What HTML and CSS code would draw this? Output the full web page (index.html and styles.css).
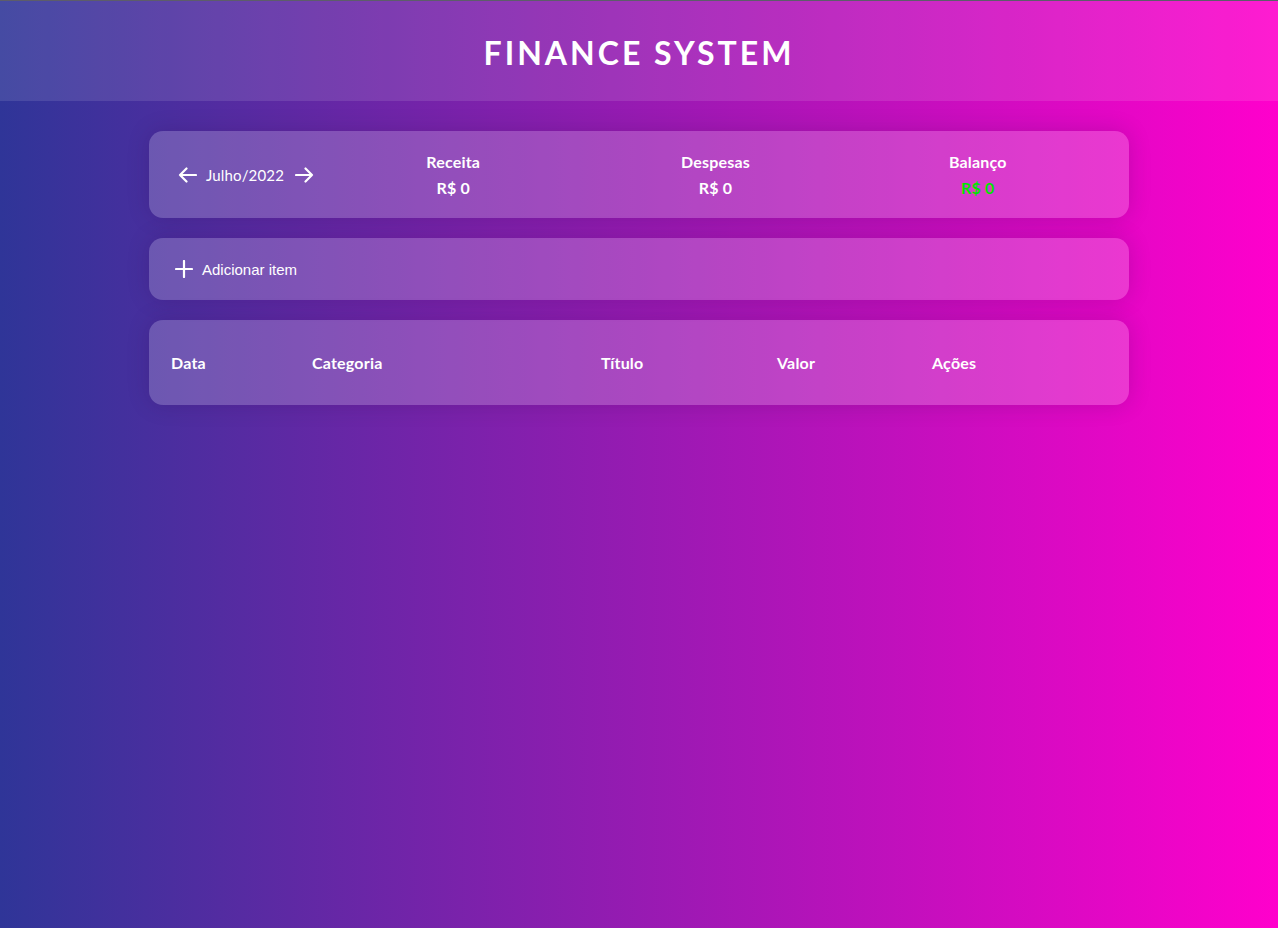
FILE: index.html
```html
<!DOCTYPE html>
<html lang="pt-BR">
<head>
<meta charset="utf-8">
<title>Finance System</title>
<link rel="stylesheet" href="styles.css">
</head>
<body>
<header class="header">
  <h1 class="header-title">FINANCE SYSTEM</h1>
</header>
<main class="body">
  <section class="card info">
    <div class="month">
      <button class="arrow" aria-label="Anterior">
        <svg width="19" height="16" viewBox="0 0 19 16"><path d="M18 8H2M8.5 1.5L2 8l6.5 6.5" fill="none" stroke="#fff" stroke-width="2.2" stroke-linecap="round" stroke-linejoin="round"/></svg>
      </button>
      <span class="month-title">Julho/2022</span>
      <button class="arrow" aria-label="Próximo">
        <svg width="19" height="16" viewBox="0 0 19 16"><path d="M1 8h16M10.5 1.5L17 8l-6.5 6.5" fill="none" stroke="#fff" stroke-width="2.2" stroke-linecap="round" stroke-linejoin="round"/></svg>
      </button>
    </div>
    <div class="resume">
      <div class="resume-title">Receita</div>
      <div class="resume-value">R$ 0</div>
    </div>
    <div class="resume">
      <div class="resume-title">Despesas</div>
      <div class="resume-value">R$ 0</div>
    </div>
    <div class="resume">
      <div class="resume-title">Balanço</div>
      <div class="resume-value positive">R$ 0</div>
    </div>
  </section>

  <section class="card add">
    <button class="add-btn">
      <svg width="18" height="18" viewBox="0 0 18 18"><path d="M9 1v16M1 9h16" stroke="#fff" stroke-width="2.2" stroke-linecap="round"/></svg>
      <span>Adicionar item</span>
    </button>
  </section>

  <section class="card list">
    <table class="table">
      <thead>
        <tr>
          <th class="c-data">Data</th>
          <th class="c-cat">Categoria</th>
          <th class="c-tit">Título</th>
          <th class="c-val">Valor</th>
          <th class="c-act">Ações</th>
        </tr>
      </thead>
    </table>
  </section>
</main>
</body>
</html>
```

FILE: styles.css
```css
* { box-sizing: border-box; }

html, body { height: 100%; }

body {
  margin: 0;
  min-height: 928px;
  background: linear-gradient(90deg, #2f3598 0%, #ff00cc 100%);
  font-family: "Lato", "Noto Sans", sans-serif;
  color: #fff;
}

.header {
  height: 101px;
  border-top: 1px solid #5d5d6a;
  background: rgba(255, 255, 255, 0.11);
  display: flex;
  align-items: center;
  justify-content: center;
}

.header-title {
  margin: 0;
  font-size: 32px;
  font-weight: 700;
  letter-spacing: 3px;
  padding-top: 3px;
}

.body {
  width: 980px;
  margin: 30px auto 0;
  display: flex;
  flex-direction: column;
  gap: 20px;
}

.card {
  background: rgba(255, 255, 255, 0.2);
  border-radius: 14px;
  box-shadow: 0 0 22px rgba(40, 0, 60, 0.18);
}

.info {
  height: 87px;
  padding: 0 20px;
  display: flex;
  align-items: center;
}

.month {
  width: 153px;
  display: flex;
  align-items: center;
  padding-left: 9px;
}

.arrow {
  border: 0;
  background: none;
  padding: 0;
  width: 19px;
  height: 16px;
  display: flex;
  cursor: pointer;
}

.month-title {
  font-size: 15px;
  letter-spacing: 0.15px;
  margin: 0 11px 0 9px;
  padding-top: 1px;
}

.resume {
  flex: 1;
  text-align: center;
  font-weight: 700;
  font-size: 16px;
  letter-spacing: 0.2px;
}

.resume-title { line-height: 18px; margin-bottom: 8px; }
.resume-value { line-height: 18px; }
.positive { color: #00e600; }

.add {
  height: 62px;
  display: flex;
  align-items: center;
  padding-left: 26px;
}

.add-btn {
  border: 0;
  background: none;
  color: #fff;
  display: flex;
  align-items: center;
  gap: 9px;
  padding: 0;
  font-family: "Liberation Sans", Arial, sans-serif;
  font-size: 15px;
  cursor: pointer;
}

.list {
  height: 85px;
  padding: 0 20px;
  display: flex;
  align-items: center;
}

.table {
  width: 100%;
  border-collapse: collapse;
}

.table th {
  text-align: left;
  font-size: 16px;
  font-weight: 700;
  letter-spacing: 0.2px;
  padding: 0;
}

.c-data { width: 143px; padding-left: 2px !important; }
.c-cat { width: 289px; }
.c-tit { width: 176px; }
.c-val { width: 155px; }
```
